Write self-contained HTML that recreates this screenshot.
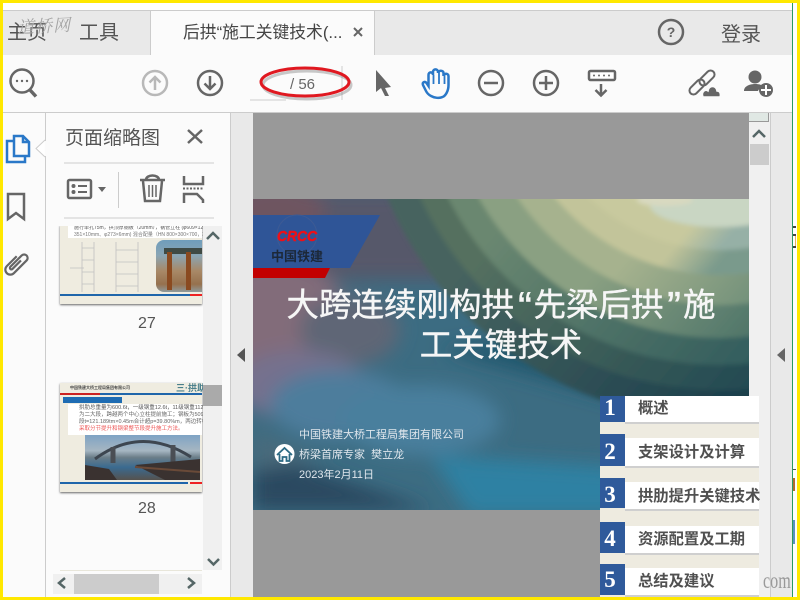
<!DOCTYPE html>
<html><head><meta charset="utf-8"><style>
html,body{margin:0;padding:0;width:800px;height:600px;overflow:hidden;background:#fff}
body{position:relative;font-family:"Liberation Sans","Noto Sans CJK SC",sans-serif;color:#555}
div,svg{position:absolute}
.t{white-space:nowrap;line-height:1}
.r{left:625px;width:134px;background:#fff;border-bottom:2px solid #cfcfcf}
.b{left:600px;width:25px;background:#2f5a9b}
.n{left:602px;width:16px;text-align:center;font:bold 23px "Liberation Serif",serif;color:#fff;line-height:1}
.l{left:638px;font-size:15.3px;font-weight:bold;color:#505050;white-space:nowrap;line-height:1}
.s{color:#dfe6ec;font-size:11px;left:299px;white-space:nowrap;line-height:1}
.q{font-size:42px;line-height:0;position:relative;top:5px}
</style></head><body>
<div style="left:3px;top:10px;width:789px;height:44px;background:#e9e9e9;border-top:1px solid #ccc;border-bottom:1px solid #ccc"></div>
<div style="left:150px;top:10px;width:225px;height:45px;background:#fbfbfb;border-left:1px solid #ccc;border-right:1px solid #ccc;border-top:1px solid #ccc;box-sizing:border-box"></div>
<div class="t" style="left:7px;top:23px;font-size:20px;color:#555">主页</div>
<div class="t" style="left:79px;top:23px;font-size:20px;color:#555">工具</div>
<div class="t" style="left:183px;top:25px;font-size:16.8px;color:#444">后拱“施工关键技术(...</div>
<div class="t" style="left:721px;top:25px;font-size:20px;color:#555">登录</div>
<div class="t" style="left:17px;top:12px;font:italic 17px 'Noto Serif CJK SC',serif;color:#a4a4a4;transform:rotate(-3deg);letter-spacing:1px">道桥网</div>
<div style="left:3px;top:55px;width:789px;height:57px;background:#fbfbfb;border-bottom:1px solid #ccc"></div>
<div style="left:3px;top:113px;width:42px;height:484px;background:#fbfbfb"></div>
<div style="left:45px;top:113px;width:1px;height:484px;background:#ccc"></div>
<div style="left:46px;top:113px;width:184px;height:484px;background:#fbfbfb"></div>
<div style="left:230px;top:113px;width:1px;height:484px;background:#ccc"></div>
<div style="left:231px;top:113px;width:22px;height:484px;background:#e9e9e9"></div>
<div style="left:253px;top:113px;width:496px;height:484px;background:#999"></div>
<div style="left:749px;top:113px;width:21px;height:484px;background:#f0f0f0"></div>
<div style="left:770px;top:113px;width:1px;height:484px;background:#ccc"></div>
<div style="left:771px;top:113px;width:21px;height:484px;background:#e9e9e9"></div>
<div style="left:749px;top:113px;width:20px;height:9px;background:#e0e8e4;border-bottom:1px solid #999;border-right:1px solid #999;box-sizing:border-box"></div>
<div style="left:750px;top:144px;width:19px;height:21px;background:#ccc"></div>
<svg style="left:0;top:0" width="800" height="600" viewBox="0 0 800 600">
<path d="M753 137l6-6 6 6" fill="none" stroke="#566" stroke-width="2.5"/>
<path d="M245 348v14l-8-7z" fill="#555"/>
<path d="M785 348v14l-8-7z" fill="#666"/>
<g fill="none" stroke="#666" stroke-width="2.5">
<circle cx="22" cy="81" r="11.5"/><path d="M30 90l6 6.500" stroke-width="3.500"/>
<circle cx="210" cy="83" r="12"/><path d="M210 76v13M204.500 83.500l5.500 5.500 5.500-5.500"/>
<circle cx="671" cy="32" r="12"/>
<circle cx="491" cy="83" r="12"/><path d="M484 83h14"/>
<circle cx="546" cy="83" r="12"/><path d="M539 83h14M546 76v14"/>
<path d="M601 84v11M595.500 90l5.500 5.500 5.500-5.500"/>
</g>
<g fill="#666"><circle cx="17" cy="81" r="1.200"/><circle cx="22" cy="81" r="1.200"/><circle cx="27" cy="81" r="1.200"/></g>
<g fill="none" stroke="#b8b8b8" stroke-width="2.500"><circle cx="155" cy="83" r="12"/><path d="M155 90v-13M149.500 82.500l5.500-5.500 5.500 5.500"/></g>
<text x="671" y="37" font-family="Liberation Sans" font-weight="bold" font-size="14" text-anchor="middle" fill="#666">?</text>
<path d="M250 100h36" stroke="#ccc"/><path d="M342 66v34" stroke="#ccc"/>
<text x="290" y="89" font-family="Liberation Sans" font-size="15" fill="#666">/ 56</text>
<ellipse cx="307" cy="85" rx="44" ry="14" fill="none" stroke="#888" stroke-width="3" opacity=".45"/>
<ellipse cx="305" cy="82" rx="44" ry="14" fill="none" stroke="#e01820" stroke-width="3"/>
<path d="M376 70l15 17-6 1 4 8-4 0-4-8-5 4z" fill="#666"/>
<g fill="none" stroke="#2a78c8" stroke-width="2.500"><path d="M431 96c-2-1-4-3-5-5l-3-6c-1-3 2-4 3.500-2l2 3V75c0-3.500 4.500-3.500 4.500 0v-3c0-3.500 5-3.500 5 0v1c0-3 5.500-3 5.500 0v3c0-3 5-3 5 0v9c0 6-3 11-6 12c-3 1.500-8 1-11.500-1z"/><path d="M433.500 75v9M439 72v12M444.500 73v11" stroke-width="1.800"/></g>
<rect x="589" y="71" width="26" height="9" rx="1.500" fill="#fff" stroke="#666" stroke-width="2.500"/>
<g fill="#666"><circle cx="594" cy="75.500" r="1"/><circle cx="599" cy="75.500" r="1"/><circle cx="604" cy="75.500" r="1"/><circle cx="609" cy="75.500" r="1"/></g>
<g fill="none" stroke="#666" stroke-width="2"><rect x="688" y="83" width="18" height="8" rx="4" transform="rotate(-45 697 87)"/><rect x="698" y="74" width="18" height="8" rx="4" transform="rotate(-45 707 78)"/></g>
<path d="M703 97c-2-5 2-8 5-6 1-6 8-6 9 0 3 0 4 3 3 6z" fill="#666" stroke="#fbfbfb" stroke-width="1.500"/>
<circle cx="755" cy="77" r="6.500" fill="#666"/><path d="M744 91c0-5 6-7 11-7s7 1 8 3c-3 1-4 2-5 4z" fill="#666"/>
<circle cx="766" cy="90" r="7" fill="#666"/><path d="M761 90h10M766 85v10" stroke="#fff" stroke-width="2"/>
<path d="M45 140l-9 8.500 9 8.500" fill="#fff" stroke="#ccc"/><path d="M45.500 141v15" stroke="#fbfbfb" stroke-width="1.500"/>
<g fill="none" stroke="#2a78c8" stroke-width="2.500"><path d="M14 141h-7v21h18v-6"/><path d="M14 136h9l6 6v14h-15z"/><path d="M23 136v6h6"/></g>
<path d="M8 194h16v25l-8-6-8 6z" fill="none" stroke="#666" stroke-width="2.500"/>
<path d="M11 258v14a5 5 0 0 0 10 0V254a3.500 3.500 0 0 0-7 0v16a1.500 1.500 0 0 0 3 0V258" fill="none" stroke="#666" stroke-width="2.200" transform="rotate(45 16 264)"/>
<path d="M188 130l14 13M202 130l-14 13" stroke="#666" stroke-width="2.500"/>
<path d="M354 28l8 8M362 28l-8 8" stroke="#666" stroke-width="2"/>
<path d="M64 163h150M64 218h150" stroke="#ccc"/><path d="M118.500 172v36" stroke="#ccc"/>
<rect x="68" y="180" width="23" height="18" rx="1.500" fill="none" stroke="#666" stroke-width="2.500"/>
<g fill="#666"><circle cx="73.500" cy="186" r="2"/><circle cx="73.500" cy="192" r="2"/><rect x="78" y="185" width="9" height="2"/><rect x="78" y="191" width="9" height="2"/><path d="M98 187h8l-4 5z"/></g>
<g fill="none" stroke="#666" stroke-width="2.500"><path d="M140 180h25M146 180c0-6 13-6 13 0"/><path d="M143 181l2 20h15l2-20"/><path d="M149 185v12M152.500 185v12M156 185v12" stroke-width="1.500"/>
<path d="M184 176v8h19v-8M184 203v-9h13l6 6v3"/></g>
<path d="M183 188.500h21" stroke="#666" stroke-width="2" stroke-dasharray="2 1.500"/>
</svg>
<div class="t" style="left:65px;top:129px;font-size:19px;color:#555">页面缩略图</div>

<!-- thumbnails -->
<div style="left:46px;top:226px;width:157px;height:344px;overflow:hidden">
<div style="left:14px;top:-1px;width:142px;height:79px;background:#efece0;box-shadow:0 1px 2px #666"></div>
<div style="left:22px;top:-1px;width:134px;height:13px;background:#fff"></div>
<div class="t" style="left:28px;top:0;font-size:5px;color:#555">施行单孔75m，拱顶厚钢板（20mm），钢管立柱 (φ609×12mm)，钢筋立柱</div>
<div class="t" style="left:28px;top:7px;font-size:5px;color:#777">351×10mm、φ273×6mm) 混合配量（HN 800×300×700，360×700×300mm）</div>
<svg style="left:14px;top:14px" width="142" height="66"><g stroke="#c0c0c0" fill="none" stroke-width=".8"><path d="M22 2v50M34 2v50M22 8h12M22 20h12M22 32h12M22 44h12M10 28h14M56 2v50M78 2v50M56 10h22M56 22h22M56 34h22M56 46h22"/></g></svg>
<div style="left:110px;top:14px;width:46px;height:52px;background:linear-gradient(#6f9dbb 0,#8aa5b4 30%,#a88866 60%,#96714e 85%,#8f9a9c);border-radius:8px 0 0 8px;overflow:hidden">
<div style="left:8px;top:8px;width:38px;height:6px;background:#3f4a44"></div>
<div style="left:11px;top:12px;width:5px;height:38px;background:#8a4a20"></div>
<div style="left:30px;top:12px;width:5px;height:38px;background:#8a4a20"></div>
</div>
<div style="left:14px;top:68px;width:142px;height:2px;background:#1f66ab"></div>
<div style="left:144px;top:68px;width:12px;height:2px;background:#e22"></div>

<div style="left:14px;top:157px;width:142px;height:109px;background:#efece0;box-shadow:0 1px 2px #666"></div>
<div class="t" style="left:24px;top:160px;font-size:4px;font-weight:bold;color:#444">中国铁建大桥工程局集团有限公司</div>
<div style="left:54px;top:167px;width:102px;height:2px;background:#1f66ab"></div>
<div style="left:14px;top:167px;width:40px;height:2px;background:#c22"></div>
<div class="t" style="left:130px;top:158px;font-size:9px;font-weight:bold;color:#4a7f8c">三·拱助提</div>
<div style="left:17px;top:171px;width:59px;height:6px;background:#1e6cb3"></div>
<div style="left:22px;top:178px;width:134px;height:31px;background:#fff"></div>
<div class="t" style="left:33px;top:180px;font-size:5.500px;color:#555">拱肋总重量为600.6t，一级钢重12.6t，11级钢重112.6t，拱高为104.2%。</div>
<div class="t" style="left:33px;top:187px;font-size:5.500px;color:#666">为二大段，跨越两个中心立柱提前施工；钢板为509.9tm×0.8m合计</div>
<div class="t" style="left:33px;top:194px;font-size:5.500px;color:#666">段t=121.189tm×0.45m合计超p=39.80%m，两边转机<span style="color:#e55">和采取的两转机变化施工</span></div>
<div class="t" style="left:33px;top:201px;font-size:5.500px;color:#e55">采取分节提升和钢梁整节段提升施工方法。</div>
<div style="left:39px;top:209px;width:115px;height:45px;background:linear-gradient(#7fa3c4 0,#a6b6c2 35%,#6a7d88 50%,#3a6a90 72%,#55524e)"></div>
<svg style="left:39px;top:209px" width="115" height="45"><path d="M10 24q46-34 96-2" fill="none" stroke="#3d4650" stroke-width="3"/><path d="M28 12v16M88 10v18" stroke="#4a4e54" stroke-width="5"/><path d="M0 45V30l24 4 8 11zM115 24v21H80L50 30z" fill="#3a3230"/><path d="M50 32l65 5" stroke="#6a4a38" stroke-width="2"/></svg>
<div style="left:14px;top:256px;width:128px;height:2px;background:#1f66ab"></div>
<div style="left:144px;top:256px;width:12px;height:2px;background:#e22"></div>
<div style="left:14px;top:344px;width:142px;height:10px;background:#efece0"></div>
</div>
<div class="t" style="left:138px;top:316px;font-size:16px;color:#555">27</div>
<div class="t" style="left:138px;top:501px;font-size:16px;color:#555">28</div>
<div style="left:46px;top:570px;width:157px;height:27px;background:#fbfbfb"></div>
<div style="left:60px;top:570px;width:142px;height:1px;background:#e8e6da"></div>
<div style="left:203px;top:226px;width:19px;height:344px;background:#f0f0f0"></div>
<div style="left:203px;top:385px;width:19px;height:21px;background:#aaa"></div>
<div style="left:53px;top:574px;width:149px;height:20px;background:#f0f0f0"></div>
<div style="left:74px;top:574px;width:85px;height:20px;background:#ccc"></div>
<svg style="left:0;top:0" width="240" height="600"><g fill="none" stroke="#566" stroke-width="2.500"><path d="M207 239l6-6 6 6M208 559l5.500 5.500 5.500-5.500M65 578l-6 5 6 5M188 578l6 5-6 5"/></g></svg>

<!-- slide -->
<svg style="left:253px;top:199px" width="496" height="311" viewBox="253 199 496 311">
<defs><filter id="f" x="-30%" y="-30%" width="160%" height="160%"><feGaussianBlur stdDeviation="9"/></filter>
<filter id="g"><feGaussianBlur stdDeviation="2.500"/></filter>
<linearGradient id="a" gradientUnits="userSpaceOnUse" x1="520" y1="200" x2="749" y2="390"><stop offset="0" stop-color="#46635f"/><stop offset="1" stop-color="#1c3f4c"/></linearGradient>
<linearGradient id="b" gradientUnits="userSpaceOnUse" x1="520" y1="200" x2="749" y2="390"><stop offset="0" stop-color="#55705f"/><stop offset="1" stop-color="#234a52"/></linearGradient>
<linearGradient id="c" gradientUnits="userSpaceOnUse" x1="520" y1="200" x2="749" y2="390"><stop offset="0" stop-color="#6a8770"/><stop offset="1" stop-color="#2f5a5c"/></linearGradient>
<linearGradient id="d" gradientUnits="userSpaceOnUse" x1="520" y1="200" x2="749" y2="390"><stop offset="0" stop-color="#8aa082"/><stop offset=".35" stop-color="#8aa082"/><stop offset="1" stop-color="#436c64"/></linearGradient>
<linearGradient id="e" gradientUnits="userSpaceOnUse" x1="520" y1="200" x2="749" y2="390"><stop offset="0" stop-color="#a6b28e"/><stop offset=".4" stop-color="#a6b28e"/><stop offset="1" stop-color="#5c8272"/></linearGradient>
<linearGradient id="h" gradientUnits="userSpaceOnUse" x1="520" y1="200" x2="749" y2="390"><stop offset="0" stop-color="#c2c49a"/><stop offset=".5" stop-color="#c2c49a"/><stop offset=".65" stop-color="#7a9a8c"/><stop offset="1" stop-color="#7a9a8c"/></linearGradient>
<linearGradient id="i" gradientUnits="userSpaceOnUse" x1="520" y1="200" x2="749" y2="390"><stop offset="0" stop-color="#c8c99e"/><stop offset=".5" stop-color="#c8c99e"/><stop offset=".62" stop-color="#96b0a6"/><stop offset="1" stop-color="#96b0a6"/></linearGradient>
<linearGradient id="j" gradientUnits="userSpaceOnUse" x1="520" y1="200" x2="749" y2="390"><stop offset="0" stop-color="#cbcca0"/><stop offset=".45" stop-color="#cbcca0"/><stop offset=".6" stop-color="#a9c0b4"/><stop offset="1" stop-color="#a9c0b4"/></linearGradient>
</defs>
<rect x="253" y="199" width="496" height="311" fill="#3c6c82"/>
<g filter="url(#f)">
<rect x="253" y="190" width="210" height="90" fill="#56596a"/>
<ellipse cx="275" cy="210" rx="50" ry="30" fill="#6e5560"/>
<ellipse cx="275" cy="320" rx="75" ry="60" fill="#826c7a"/>
<ellipse cx="350" cy="330" rx="50" ry="35" fill="#5f6676"/>
<ellipse cx="300" cy="385" rx="65" ry="35" fill="#75718e"/>
<ellipse cx="340" cy="405" rx="70" ry="35" fill="#4d7d9c"/>
<ellipse cx="420" cy="420" rx="80" ry="35" fill="#4a7f9d"/>
<path d="M253 450l180 60H253z" fill="#2c4a60"/>
<path d="M430 455l320 20v40H470z" fill="#2e81a3"/>
<path d="M440 350L760 440V380L560 330z" fill="#24586e"/>
<path d="M253 430l70 30-70 10z" fill="#4a6a7c"/>
</g>
<g filter="url(#g)">
<circle cx="720" cy="60" r="360" fill="url(#a)"/>
<circle cx="720" cy="60" r="330" fill="url(#b)"/>
<circle cx="720" cy="60" r="305" fill="url(#c)"/>
<circle cx="720" cy="60" r="278" fill="url(#d)"/>
<circle cx="720" cy="60" r="245" fill="url(#e)"/>
<circle cx="720" cy="60" r="215" fill="url(#h)"/>
<circle cx="720" cy="60" r="190" fill="url(#i)"/>
<circle cx="720" cy="60" r="165" fill="url(#j)"/>
<ellipse cx="720" cy="205" rx="70" ry="22" fill="#c9d6c3"/>
<ellipse cx="665" cy="200" rx="28" ry="6" fill="#d8d9c0"/>
</g>
<path d="M253 215H380L350 268H253z" fill="#2f5597"/>
<path d="M253 268H330L325 278H253z" fill="#c20000"/>
<circle cx="297" cy="235" r="20" fill="none" stroke="#3d5b94" stroke-width="1"/>
<text x="277" y="241" font-family="Liberation Sans" font-style="italic" font-weight="bold" font-size="15" fill="#ee1018" stroke="#ee1018" stroke-width=".5" textLength="40" lengthAdjust="spacingAndGlyphs">CRCC</text>
<text x="271" y="261" font-family="Liberation Sans,Noto Sans CJK SC,sans-serif" font-weight="bold" font-size="13" fill="#1c2838">中国铁建</text>
<circle cx="284.500" cy="454" r="10" fill="#fff"/>
<path d="M277 455l7.500-7 7.500 7M279.500 454v7h3v-4h4v4h3v-7" fill="none" stroke="#2c6a84" stroke-width="1.800"/>
</svg>
<div class="t" style="left:253px;top:289px;width:496px;text-align:center;font-size:32.500px;color:#f6f6f6;-webkit-text-stroke:.4px #f6f6f6">大跨连续刚构拱<span class="q" style="padding:0 1.5px 0 4px">“</span>先梁后拱<span class="q" style="padding:0 2px 0 3.500px">”</span>施</div>
<div class="t" style="left:253px;top:329px;width:496px;text-align:center;font-size:32.500px;color:#f6f6f6;-webkit-text-stroke:.4px #f6f6f6">工关键技术</div>
<div class="s" style="top:430px">中国铁建大桥工程局集团有限公司</div>
<div class="s" style="top:450px">桥梁首席专家&nbsp; 樊立龙</div>
<div class="s" style="top:470px">2023年2月11日</div>

<!-- list -->
<div style="left:600px;top:396px;width:159px;height:201px;background:#eeebe0"></div>
<div class="r" style="top:396px;height:26px"></div><div class="b" style="top:396px;height:26px"></div><div class="n" style="top:396px">1</div><div class="l" style="top:401px">概述</div>
<div class="r" style="top:438px;height:28px"></div><div class="b" style="top:434px;height:32px"></div><div class="n" style="top:440px">2</div><div class="l" style="top:445px">支架设计及计算</div>
<div class="r" style="top:482px;height:27px"></div><div class="b" style="top:478px;height:30px"></div><div class="n" style="top:483px">3</div><div class="l" style="top:489px">拱肋提升关键技术</div>
<div class="r" style="top:526px;height:27px"></div><div class="b" style="top:522px;height:31px"></div><div class="n" style="top:527px">4</div><div class="l" style="top:532px">资源配置及工期</div>
<div class="r" style="top:568px;height:27px"></div><div class="b" style="top:564px;height:31px"></div><div class="n" style="top:568px">5</div><div class="l" style="top:574px">总结及建议</div>
<div class="t" style="left:763px;top:568px;font:23px 'Liberation Serif',serif;color:#999;transform:scaleX(.7);transform-origin:left">com</div>

<!-- frame -->
<div style="left:792px;top:3px;width:1px;height:594px;background:#2a9a60"></div>
<div style="left:793px;top:3px;width:4px;height:594px;background:#fff"></div>
<div style="left:793px;top:226px;width:3px;height:2px;background:#444"></div>
<div style="left:793px;top:234px;width:3px;height:2px;background:#444"></div>
<div style="left:795px;top:236px;width:1px;height:10px;background:#e8b060"></div>
<div style="left:793px;top:246px;width:3px;height:2px;background:#444"></div>
<div style="left:793px;top:469px;width:3px;height:1px;background:#555"></div>
<div style="left:793px;top:478px;width:2px;height:13px;background:#b06a30"></div>
<div style="left:793px;top:520px;width:2px;height:24px;background:#5a90c0"></div>
<div style="left:0;top:0;width:800px;height:3px;background:#ffe800"></div>
<div style="left:0;top:597px;width:800px;height:3px;background:#ffe800"></div>
<div style="left:0;top:0;width:3px;height:600px;background:#ffe800"></div>
<div style="left:797px;top:0;width:3px;height:600px;background:#ffe800"></div>
</body></html>
